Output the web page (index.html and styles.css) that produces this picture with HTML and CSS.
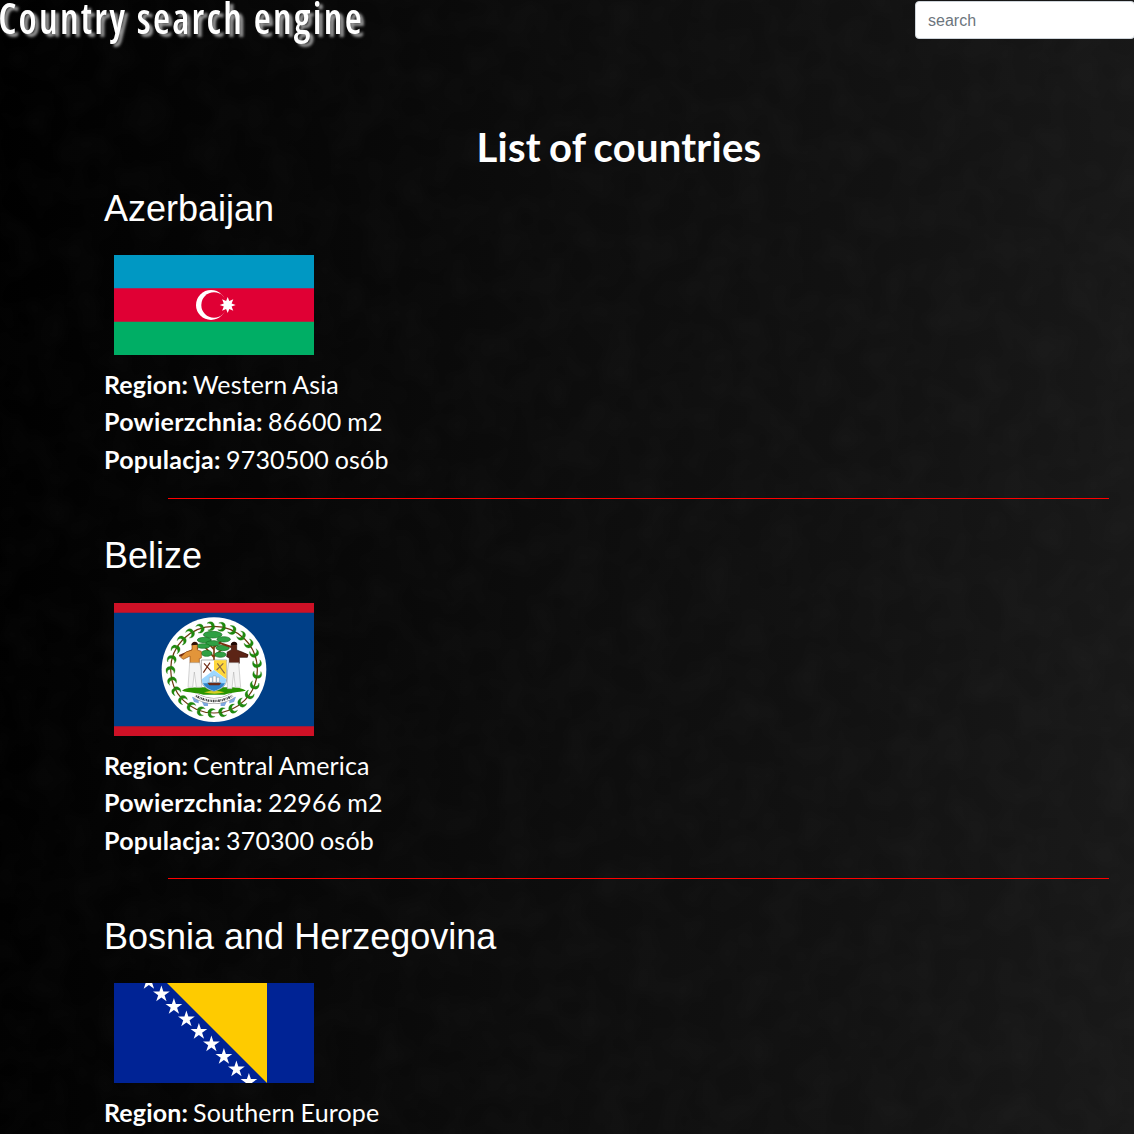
FILE: index.html
```html
<!DOCTYPE html>
<html lang="en">
<head>
<meta charset="utf-8">
<title>Country search engine</title>
<link rel="stylesheet" href="styles.css">
</head>
<body>
<svg class="backdrop" aria-hidden="true">
  <filter id="grain" x="0" y="0" width="100%" height="100%">
    <feTurbulence type="fractalNoise" baseFrequency="0.03" numOctaves="2" seed="4"/>
    <feColorMatrix values="0 0 0 0 1  0 0 0 0 1  0 0 0 0 1  .035 0 0 0 -.013"/>
  </filter>
  <rect width="100%" height="100%" filter="url(#grain)"/>
</svg>
<header class="topbar">
  <h1 class="brand">Country search engine</h1>
  <input class="search" type="text" placeholder="search">
</header>
<main class="content">
  <h2 class="title">List of countries</h2>

  <article class="country">
    <h3 class="name">Azerbaijan</h3>
    <svg class="flag" viewBox="0 0 200 100">
      <path fill="#0098c3" d="M0 0h200v34H0z"/>
      <path fill="#e00034" d="M0 33.33h200v34H0z"/>
      <path fill="#00ae65" d="M0 66.67h200V100H0z"/>
      <circle cx="97" cy="50" r="15" fill="#fff"/>
      <circle cx="100" cy="50" r="12.7" fill="#e00034"/>
      <path fill="#fff" d="M113.7 42l1.6 4.1 4-1.8-1.7 4.1 4.1 1.6-4.1 1.6 1.7 4.1-4-1.8-1.6 4.1-1.6-4.1-4 1.8 1.7-4.1-4.1-1.6 4.1-1.6-1.7-4.1 4 1.8z"/>
    </svg>
    <p class="info place"><b>Region:</b> Western Asia</p>
    <p class="info"><b>Powierzchnia:</b> 86600 m2</p>
    <p class="info"><b>Populacja:</b> 9730500 osób</p>
  </article>
  <hr class="rule">

  <article class="country">
    <h3 class="name">Belize</h3>
    <svg class="flag flag-tall" viewBox="0 0 200 133.333">
      <path fill="#ce1126" d="M0 0h200v133.333H0z"/>
      <path fill="#003f87" d="M0 9.7h200v113.6H0z"/>
      <g transform="translate(40 7) scale(.33333)">
        <circle cx="180" cy="179" r="157" fill="#fff"/>
        <circle cx="180" cy="179" r="130" fill="none" stroke="#6b3a10" stroke-width="3.5"/>
        <defs>
          <path id="leaf" fill="#1d8a0c" stroke="#1d7a0c" stroke-width=".8" d="M181 48c1-12-12-17-22-8 8-2 13 1 14 8zM183 49c-1 12-12 17-22 11 8 0 11-4 13-11z"/>
        </defs>
        <use href="#leaf"/>
        <use href="#leaf" transform="rotate(14.4 180 179)"/>
        <use href="#leaf" transform="rotate(28.8 180 179)"/>
        <use href="#leaf" transform="rotate(43.2 180 179)"/>
        <use href="#leaf" transform="rotate(57.6 180 179)"/>
        <use href="#leaf" transform="rotate(72 180 179)"/>
        <use href="#leaf" transform="rotate(86.4 180 179)"/>
        <use href="#leaf" transform="rotate(100.8 180 179)"/>
        <use href="#leaf" transform="rotate(115.2 180 179)"/>
        <use href="#leaf" transform="rotate(129.6 180 179)"/>
        <use href="#leaf" transform="rotate(144 180 179)"/>
        <use href="#leaf" transform="rotate(158.4 180 179)"/>
        <use href="#leaf" transform="rotate(172.8 180 179)"/>
        <use href="#leaf" transform="rotate(187.2 180 179)"/>
        <use href="#leaf" transform="rotate(201.6 180 179)"/>
        <use href="#leaf" transform="rotate(216 180 179)"/>
        <use href="#leaf" transform="rotate(230.4 180 179)"/>
        <use href="#leaf" transform="rotate(244.8 180 179)"/>
        <use href="#leaf" transform="rotate(259.2 180 179)"/>
        <use href="#leaf" transform="rotate(273.6 180 179)"/>
        <use href="#leaf" transform="rotate(288 180 179)"/>
        <use href="#leaf" transform="rotate(302.4 180 179)"/>
        <use href="#leaf" transform="rotate(316.8 180 179)"/>
        <use href="#leaf" transform="rotate(331.2 180 179)"/>
        <use href="#leaf" transform="rotate(345.6 180 179)"/>
        <!-- tree -->
        <path fill="none" stroke="#7b3f10" stroke-width="5" d="M180 150V92M180 142l-26-30M180 140l28-26M180 118l-22-24M180 112l22-18"/>
        <g fill="#2fa043" stroke="#14701f" stroke-width="2">
          <ellipse cx="176" cy="74" rx="28" ry="10"/>
          <ellipse cx="151" cy="90" rx="21" ry="8"/>
          <ellipse cx="209" cy="88" rx="20" ry="8"/>
          <ellipse cx="178" cy="100" rx="23" ry="8"/>
          <ellipse cx="148" cy="108" rx="20" ry="7"/>
          <ellipse cx="206" cy="114" rx="20" ry="8"/>
          <ellipse cx="158" cy="130" rx="16" ry="9"/>
          <ellipse cx="199" cy="134" rx="17" ry="8"/>
        </g>
        <!-- ground -->
        <path fill="#289400" d="M84 242c16-12 42-8 58-10h76c22 0 42 0 58 10-22 4-50 6-64 12h-64c-18-6-44-6-64-12z"/>
        <path fill="#d8d020" d="M150 247q30-10 62 0-30 8-62 0z"/>
        <!-- supporters -->
        <g>
          <path fill="none" stroke="#7b3010" stroke-width="6" d="M76 138l56-24M194 98l38 13M250 126l32 10"/>
          <path fill="#e2953a" stroke="#8d4a12" stroke-width="2" d="M114 120v-14c0-10 16-10 16 0v14l12 4v20l-6 2v14h-28v-22l-20 10-8-6 16-16z"/>
          <path fill="#301008" d="M112 106c0-14 20-14 20-2z"/>
          <path fill="#5c2416" stroke="#2e0d06" stroke-width="2" d="M232 120v-14c0-12 16-12 16 0v14l16 6 18 8-2 8-24 0v18h-30v-16l-8-4 2-14z"/>
          <path fill="#200804" d="M230 106c0-14 20-14 20-2z"/>
        </g>
        <g fill="#f4f4f4" stroke="#aaa" stroke-width="1.5">
          <path d="M107 158h30l6 28v46h-16l-6-46-5 46h-14z"/>
          <path d="M224 158h30l6 74h-16l-5-46-5 50h-14v-50z"/>
        </g>
        <!-- shield -->
        <path fill="#fff" stroke="#888" stroke-width="2" d="M142 150h76v56c0 20-14 32-38 38-24-6-38-18-38-38z"/>
        <path fill="#ffd83c" d="M180 151h37v56l-37-28z"/>
        <path fill="#9dd7ff" d="M180 180l37 28c-2 18-16 28-37 35-22-6-36-16-37-35z"/>
        <path fill="#2f83c9" d="M147 220h66c-6 12-16 18-33 23-17-5-28-12-33-23z"/>
        <path fill="none" stroke="#702b15" stroke-width="3.5" d="M150 160l22 24M168 158l-20 30"/>
        <path fill="none" stroke="#8b6a48" stroke-width="3.5" d="M190 160l22 30M208 160l-20 20"/>
        <path fill="#fff" stroke="#777" stroke-width="1" d="M166 202h9v15h-9zM177 198h9v19h-9zM188 202h8v15h-8z"/>
        <path fill="#6b2b16" d="M160 218h42l-6 8h-30z"/>
        <!-- motto ribbon -->
        <path fill="#7ea8e0" d="M114 260l20 6v14l-14-4zM246 260l-20 6v14l14-4zM144 276h18v12h-12zM200 276h18l-6 12h-12z"/>
        <path fill="none" stroke="#999" stroke-width="18" d="M124 257q56 32 112 0"/>
        <path fill="none" stroke="#fff" stroke-width="15" d="M124 257q56 32 112 0"/>
        <path fill="none" stroke="#444" stroke-width="7" stroke-dasharray="3 2 5 2 2 2" d="M126 258q54 30 108 0"/>
      </g>
    </svg>
    <p class="info place"><b>Region:</b> Central America</p>
    <p class="info"><b>Powierzchnia:</b> 22966 m2</p>
    <p class="info"><b>Populacja:</b> 370300 osób</p>
  </article>
  <hr class="rule">

  <article class="country">
    <h3 class="name">Bosnia and Herzegovina</h3>
    <svg class="flag" viewBox="0 0 200 100">
      <path fill="#002395" d="M0 0h200v100H0z"/>
      <path fill="#fecb00" d="M53 0h100v100z"/>
      <defs>
        <path id="star" fill="#fff" d="M0-8.8L1.98-2.72H8.37L3.2 1.04 5.17 7.12 0 3.36-5.17 7.12-3.2 1.04-8.37-2.72H-1.98z"/>
      </defs>
      <use href="#star" x="34.9" y="-1.3"/>
      <use href="#star" x="47.4" y="11.2"/>
      <use href="#star" x="59.9" y="23.7"/>
      <use href="#star" x="72.4" y="36.2"/>
      <use href="#star" x="84.9" y="48.7"/>
      <use href="#star" x="97.4" y="61.2"/>
      <use href="#star" x="109.9" y="73.7"/>
      <use href="#star" x="122.4" y="86.2"/>
      <use href="#star" x="134.9" y="98.7"/>
    </svg>
    <p class="info place"><b>Region:</b> Southern Europe</p>
  </article>
</main>
</body>
</html>
```
FILE: styles.css
```css
* { box-sizing: border-box; }
body {
  margin: 0;
  height: 1134px;
  overflow: hidden;
  color: #fff;
  background: linear-gradient(93deg, #000 0%, #050505 20%, #0d0d0d 50%, #121212 75%, #191919 100%);
  font-family: Lato, sans-serif;
}
.backdrop {
  position: absolute;
  inset: 0;
  z-index: -1;
  width: 100%;
  height: 100%;
}
.topbar {
  display: flex;
  justify-content: space-between;
  align-items: flex-start;
  height: 125px;
}
.brand {
  width: 420px;
  margin: 0;
  font: 600 43px/36px "Open Sans", sans-serif;
  font-stretch: 75%;
  letter-spacing: 2.5px;
  text-indent: -2px;
  white-space: nowrap;
  transform: scaleX(.91);
  transform-origin: 0 0;
  text-shadow: 4px 3px 3px #999;
}
.search {
  width: 220px;
  height: 38px;
  margin: 1px -1px 0 0;
  padding: 7px 12px 5px;
  border: 1px solid #ced4da;
  border-radius: 4px;
  background: #fff;
  font: 16px/24px "Liberation Sans", sans-serif;
}
.search::placeholder { color: #6c757d; opacity: 1; }
.content { padding-left: 104px; }
.title {
  margin: 0;
  height: 61.8px;
  font-size: 40px;
  font-weight: 700;
  line-height: 44px;
  letter-spacing: .25px;
  word-spacing: -2px;
  text-align: center;
}
.name {
  margin: 0 0 25.3px;
  font: 400 36px/43.2px "Liberation Sans", sans-serif;
}
.flag {
  display: block;
  width: 200px;
  height: 100px;
  margin: 0 0 10.65px 10px;
}
.flag-tall { height: 133.33px; }
.info {
  margin: 0;
  font-size: 25px;
  line-height: 37.5px;
  letter-spacing: .2px;
  word-spacing: -.8px;
}
.info b {
  margin-right: -.6px;
  letter-spacing: .28px;
}
.place { letter-spacing: .13px; }
.place b { letter-spacing: .13px; }
.rule {
  height: 1px;
  margin: 19.3px 25px 35.35px 64px;
  border: 0;
  background: #f00;
}
```
